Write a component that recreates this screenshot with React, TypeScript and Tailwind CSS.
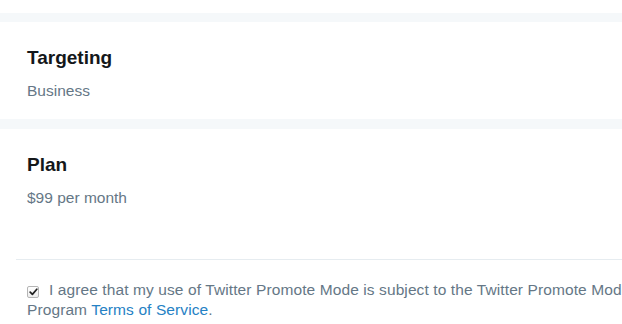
import React from "react";

function Section({ title, value }: { title: string; value: string }) {
  return (
    <div className="px-[27px] pt-[24px] pb-[18px] bg-white">
      <h2 className="text-[19px] leading-[24px] font-bold text-[#14171a]">{title}</h2>
      <p className="mt-[11px] text-[15.5px] leading-[20px] text-[#657786]">{value}</p>
    </div>
  );
}

function Checkbox() {
  return (
    <span className="inline-flex items-center justify-center align-[-1px] w-[12px] h-[12px] mr-[10px] rounded-[2px] border border-[#b5b5b5] bg-gradient-to-b from-white to-[#ededed]">
      <svg width="9" height="8" viewBox="0 0 9 8" fill="none">
        <path d="M1.2 4.2 L3.4 6.4 L7.8 1.2" stroke="#222" strokeWidth="1.7" strokeLinecap="round" strokeLinejoin="round" />
      </svg>
    </span>
  );
}

export default function App() {
  return (
    <div
      className="w-[622px] h-[324px] overflow-hidden bg-white"
      style={{ fontFamily: '"Liberation Sans", Arial, sans-serif' }}
    >
      <div className="h-[13px]" />
      <div className="h-[9px] bg-[#f5f8fa]" />
      <Section title="Targeting" value="Business" />
      <div className="h-[10px] bg-[#f5f8fa]" />
      <Section title="Plan" value="$99 per month" />
      <div className="h-[33px]" />
      <div className="ml-4 border-t border-[#e6ecf0] pt-[20px] pl-[11px]">
        <p className="w-[640px] text-[15.5px] tracking-[0.1px] leading-[20px] text-[#657786]">
          <Checkbox />
          I agree that my use of Twitter Promote Mode is subject to the Twitter Promote Mode Program{" "}
          <a href="#" className="text-[#2581c4]">Terms of Service</a>.
        </p>
      </div>
    </div>
  );
}
